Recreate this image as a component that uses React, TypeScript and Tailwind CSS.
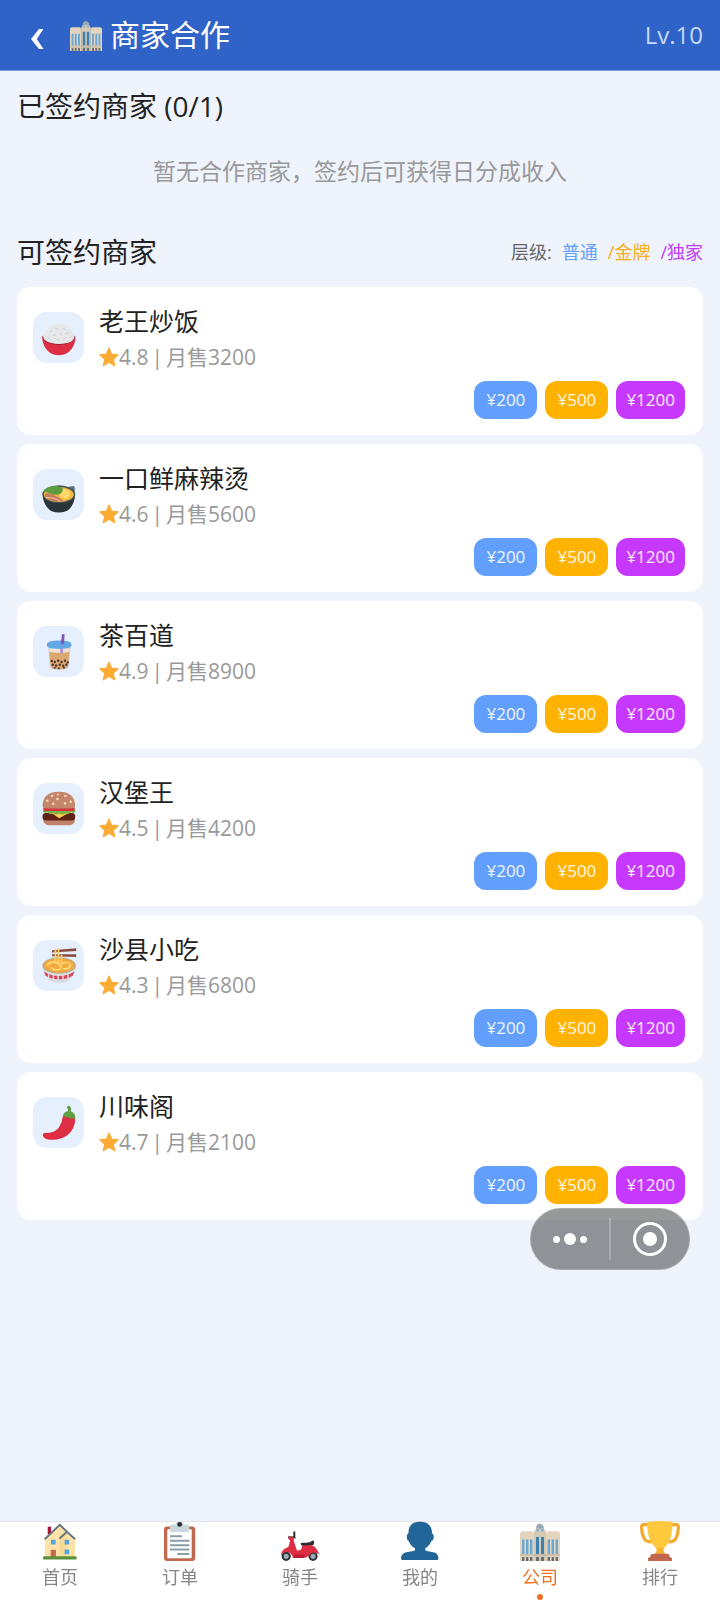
import React, { useState } from 'react';

interface Merchant {
  name: string;
  rating: string;
  sales: number;
  icon: React.ReactNode;
}

const BuildingIcon: React.FC<{ className?: string }> = ({ className }) => (
  <svg viewBox="0 0 40 40" className={className} aria-hidden="true">
    <path d="M16 8 Q16 3 19.5 2.6 Q24 3 24 8Z" fill="#a9aba6" />
    <path d="M0 12 L2 10.3 H12 L14 12 V40 H0Z M26 12 L28 10.3 H38 L40 12 V40 H26Z" fill="#e3d5bd" />
    <path d="M14 11 L16 7.5 H24 L26 11 V40 H14Z" fill="#d3c9b5" />
    <path d="M16.5 8 H18.5 V10.5 H16.5Z M21.5 8 H23.5 V10.5 H21.5Z M19 4.5h2v3h-2z" fill="#6faed2" />
    <path d="M2 18.5h2.4V33H2z M6 18.5h2.4V33H6z M10 18.5h2.4V33H10z M27.6 18.5H30V33h-2.4z M31.6 18.5H34V33h-2.4z M35.6 18.5H38V33h-2.4z" fill="#6aa9d6" />
    <path d="M16 16h3v17h-3z M21 16h3v17h-3z" fill="#3d7fae" />
    <path d="M0 33.4h40v1H0z" fill="#bcb09b" />
    <path d="M2 36h2.4v4H2z M6 36h2.4v4H6z M10 36h2.4v4H10z M16 36h3v4h-3z M21 36h3v4h-3z M27.6 36H30v4h-2.4z M31.6 36H34v4h-2.4z M35.6 36H38v4h-2.4z" fill="#6b6d6c" />
  </svg>
);

const HomeIcon = () => (
  <svg viewBox="0 0 40 40" className="size-10" aria-hidden="true">
    <path d="M7.7 5.7h3.4V13H7.7z" fill="#a8173a" />
    <path d="M5 17.5 L20 4 L35 18.5 V36 H5Z" fill="#fde3a7" />
    <path d="M19.5 17 L26.7 11 V36 H19.5Z" fill="#f8d68b" opacity=".6" />
    <path d="M4.6 18.3 L19.8 3.8 L27 10.8 M19.5 17.6 L27 10.8 L35.2 18.3" fill="none" stroke="#66757f" strokeWidth="2" />
    <path d="M11 18.8h4.6v4.6H11z M24.6 18.8h4.6v4.6h-4.6z M24.6 28.6h4.6v4.6h-4.6z" fill="#55a4e0" />
    <path d="M10.7 28.8h5.2V36h-5.2z" fill="#c1694f" />
    <rect x="2.8" y="35.3" width="34" height="3.3" rx="1.6" fill="#5c913b" />
  </svg>
);

const ClipboardIcon = () => (
  <svg viewBox="0 0 40 40" className="size-10" aria-hidden="true">
    <rect x="4" y="5.6" width="31.2" height="34.4" rx="3" fill="#c1694f" />
    <rect x="7.3" y="8.3" width="24.4" height="29" rx="1" fill="#fff" />
    <path d="M10 5 Q10 3.6 12 3.6 H15.5 Q16 .6 19.7 .6 Q23 .6 23.6 3.6 H27 Q29.2 3.6 29.2 5 V11 H10Z" fill="#ccd6dd" />
    <circle cx="19.7" cy="3.4" r="2.4" fill="#292f33" />
    <path d="M10 15.3h12 M10 19.8h19.4 M10 24.2h19.4 M10 28.6h19.4 M17.3 33h12" stroke="#8b9da8" strokeWidth="2" />
  </svg>
);

const ScooterIcon = () => (
  <svg viewBox="0 0 40 40" className="size-10" aria-hidden="true">
    <circle cx="6.2" cy="35.3" r="3.6" fill="#99aab5" stroke="#292f33" strokeWidth="2" />
    <circle cx="33" cy="35.3" r="3.6" fill="#99aab5" stroke="#292f33" strokeWidth="2" />
    <path d="M14.3 11.2v4 M9 16.3l5.6 .3" stroke="#292f33" strokeWidth="2" strokeLinecap="round" />
    <path d="M8.7 15.6 L14 16.4 Q13 19 14.4 22 L17 29.5 Q20.6 30 21.6 27.6 L22.2 24.4 Q27 22 32.6 24.6 Q38 28 39 33.6 Q33 29 28.4 35 Q26 37.4 22 37 H13 Q11.5 30.6 5.8 31 Q3 31.5 .9 34.4 Q1.6 29.4 5 27.5 L8.4 26 L10.3 19.2 L8.3 18Z" fill="#dd2e44" />
    <path d="M14 33.5h11l-1 3.5H14z" fill="#be1931" />
    <path d="M20.6 22.6 Q21 21.4 24 21.8 Q30 21.6 32.6 19.4 Q34.5 19.6 34.2 21.4 L33.3 24 L21.5 24.4Z" fill="#292f33" />
  </svg>
);

const PersonIcon = () => (
  <svg viewBox="0 0 40 40" className="size-10" aria-hidden="true">
    <path d="M20 .7 C28.5 .7 32 5.5 32 11.8 C32 12.8 33.8 13 33.8 16 C33.8 19 32 19.7 31.3 20 C30 23.8 27.5 26 25.2 27.3 V29.2 C27 30.4 31 30.3 34.5 31.6 C37.5 32.8 38.4 35 38.4 37.4 Q38.4 39 36.8 39 H2.6 Q1 39 1 37.4 C1 35 2.3 32.8 5.3 31.6 C8.6 30.3 13.2 30.4 15 29.2 V27.3 C12.6 26 10 23.8 8.8 20 C8 19.7 6.8 19 6.8 16 C6.8 13 8.5 12.8 8.5 11.8 C8.5 5.5 11.5 .7 20 .7Z" fill="#226699" />
  </svg>
);

const TrophyIcon = () => (
  <svg viewBox="0 0 40 40" className="size-10" aria-hidden="true">
    <path d="M8 3.7 H3.5 Q1.4 3.7 1.6 6.3 Q2 14.5 5 18.6 Q6.6 20.8 11.5 20.8 M32 3.7 H36.5 Q38.6 3.7 38.4 6.3 Q38 14.5 35 18.6 Q33.4 20.8 28.5 20.8" fill="none" stroke="#f4a92c" strokeWidth="3.2" />
    <path d="M7 1.5 Q11 0 20 0 Q29 0 32.6 1.5 Q32.4 20 25 26 Q23 28 23.4 30 L25.6 33.5 H14.4 L16.6 30 Q17 28 15 26 Q7.4 20 7 1.5Z" fill="#ffc83d" />
    <path d="M17 27 H23 Q22.8 31 25.6 34 H14.4 Q17.4 31 17 27Z" fill="#f9b233" />
    <path d="M8 40 V37.5 Q8.3 36 10.4 36 V34.6 Q10.6 32.8 13 32.8 H27 Q29.4 32.8 29.6 34.6 V36 Q31.7 36 32 37.5 V40Z" fill="#c1694f" />
  </svg>
);

const StarIcon = () => (
  <svg viewBox="0 0 20 20" className="size-5" aria-hidden="true">
    <path d="M10 1 L12.6 7.2 L19.2 7.8 L14.2 12.2 L15.8 18.8 L10 15.3 L4.2 18.8 L5.8 12.2 L.8 7.8 L7.4 7.2Z" fill="#fcab35" stroke="#fcab35" strokeWidth="1.2" strokeLinejoin="round" />
  </svg>
);

const RiceIcon = () => (
  <svg viewBox="0 0 150 150" className="size-full" aria-hidden="true">
    <path d="M27 72 Q27 92 38 108 Q52 127 76 127 Q100 127 114 108 Q125 92 125 72Z" fill="#dd2e44" />
    <path d="M29 70 Q26 80 40 89 Q76 104 112 89 Q126 80 123 70Z" fill="#8f1630" />
    <path d="M30 74 Q30 58 44 50 Q56 34 77 34 Q98 34 110 50 Q122 60 122 74 Q119 87 100 91 Q76 97 53 91 Q33 86 30 74Z" fill="#e6e8ea" />
    <path d="M50 58l6-4 M66 48l7 3 M88 47l6 4 M60 70l7-4 M80 62l4 6 M97 64l8-2 M43 74l6 3 M70 82l8-1 M90 80l6-5 M108 76l5-3" stroke="#c8d0d5" strokeWidth="3" strokeLinecap="round" />
  </svg>
);

const HotpotIcon = () => (
  <svg viewBox="0 0 150 150" className="size-full" aria-hidden="true">
    <path d="M98 54 L118 50 Q124 51 123 58 L122 72Z" fill="#5d6f7c" />
    <path d="M28 70 Q28 100 46 118 Q54 128 76 128 Q98 128 107 118 Q124 100 124 70Z" fill="#2b3438" />
    <ellipse cx="76" cy="74" rx="48" ry="26" fill="#46545c" />
    <ellipse cx="76" cy="75" rx="44" ry="22" fill="#f3b545" />
    <path d="M80 60 Q104 56 110 70 Q114 82 98 88 Q82 86 78 74Z" fill="#ffd76a" />
    <path d="M34 74 Q48 68 60 76 Q78 84 88 94 Q62 99 46 90 Q34 84 34 74Z" fill="#c67d5c" />
    <path d="M38 84 Q60 82 80 95" fill="none" stroke="#f2bd9c" strokeWidth="3" />
    <path d="M30 68 Q38 50 66 50 Q86 50 88 61 Q85 74 70 76 Q58 76 50 71 Q40 68 30 68Z" fill="#5c9c3f" />
  </svg>
);

const BubbleTeaIcon = () => (
  <svg viewBox="0 0 150 150" className="size-full" aria-hidden="true">
    <path d="M44 58 H111 L105 120 Q102 129 78 129 Q52 129 50 120Z" fill="#c9d3da" />
    <path d="M48 76 Q78 82 107 76 L103 119 Q100 127 78 127 Q54 127 52 119Z" fill="#dda770" />
    <path d="M48 66 H107 V76 Q78 82 48 76Z" fill="#efe3d3" />
    <path d="M80 62 h8 v18 h-8z" fill="#b08fd4" />
    <path d="M41 54 Q41 43 77 43 Q113 43 113 54 V58 Q113 67 77 67 Q41 67 41 58Z" fill="#62a6e3" />
    <path d="M82 52 L85 24 H93 L91 54Z" fill="#8053b8" />
    <g fill="#4b3430">
      <circle cx="55" cy="103" r="3.5" /><circle cx="64" cy="106" r="3.5" /><circle cx="74" cy="102" r="3.5" />
      <circle cx="84" cy="106" r="3.5" /><circle cx="94" cy="102" r="3.5" /><circle cx="102" cy="107" r="3.5" />
      <circle cx="58" cy="114" r="3.5" /><circle cx="68" cy="116" r="3.5" /><circle cx="79" cy="114" r="3.5" />
      <circle cx="89" cy="117" r="3.5" /><circle cx="98" cy="114" r="3.5" /><circle cx="64" cy="123" r="3" />
      <circle cx="76" cy="124" r="3" /><circle cx="91" cy="123" r="3" />
    </g>
  </svg>
);

const BurgerIcon = () => (
  <svg viewBox="0 0 150 150" className="size-full" aria-hidden="true">
    <path d="M30 102 H123 Q126 124 106 124 H48 Q28 124 30 102Z" fill="#c0826a" />
    <rect x="28" y="88" width="96" height="22" rx="10" fill="#5f2216" />
    <path d="M34 84 H118 L98 92 L77 104 L60 92Z" fill="#ffcf4a" />
    <path d="M28 82 Q33 74 44 78 H110 Q122 74 126 83 Q120 91 112 86 Q104 95 96 88 Q88 96 77 90 Q66 96 58 88 Q50 95 42 86 Q34 92 28 82Z" fill="#7bb245" />
    <rect x="30" y="70" width="93" height="12" rx="6" fill="#d4323f" />
    <path d="M28 66 Q30 26 76 26 Q122 26 124 66 Q124 75 110 75 H42 Q28 75 28 66Z" fill="#c4866d" />
    <g fill="#ffe4b0">
      <circle cx="56" cy="38" r="3.5" /><circle cx="73" cy="34" r="3" /><circle cx="95" cy="38" r="3.5" />
      <circle cx="42" cy="52" r="3.5" /><circle cx="72" cy="47" r="3.5" /><circle cx="60" cy="61" r="3.5" />
      <circle cx="94" cy="60" r="3.5" /><circle cx="111" cy="55" r="3.5" />
    </g>
  </svg>
);

const NoodlesIcon = () => (
  <svg viewBox="0 0 150 150" className="size-full" aria-hidden="true">
    <path d="M28 74 Q28 102 46 116 Q58 127 77 127 Q96 127 108 116 Q126 102 126 74Z" fill="#d9dde0" />
    <path d="M33 93 Q50 106 77 106 Q104 106 121 93 L118 104 Q104 116 77 116 Q50 116 36 104Z" fill="#d2475c" />
    <path d="M46 98 v14 M60 102 v14 M74 104 v14 M88 103 v14 M103 99 v14" stroke="#f5d9dc" strokeWidth="4" />
    <ellipse cx="77" cy="75" rx="49" ry="24" fill="#b8a78c" />
    <ellipse cx="77" cy="75" rx="45" ry="21" fill="#f5a93a" />
    <path d="M42 74 Q52 60 72 68 Q90 76 78 86 Q62 92 54 82 M88 68 Q108 62 110 76 Q106 88 90 84" fill="none" stroke="#ffdc7c" strokeWidth="5" strokeLinecap="round" />
    <path d="M56 30 L127 24 V32 L56 37Z M56 42 L127 42 V50 L56 48Z" fill="#8a4b3f" />
    <path d="M66 68 V28 M75 68 V26 M84 70 V45" fill="none" stroke="#ffd268" strokeWidth="5" strokeLinecap="round" />
  </svg>
);

const ChiliIcon = () => (
  <svg viewBox="0 0 150 150" className="size-full" aria-hidden="true">
    <path d="M88 56 Q122 50 124 68 Q123 94 102 112 Q78 130 44 125 Q28 120 29 110 Q31 103 42 106 Q64 106 76 90 Q86 76 88 56Z" fill="#dd2e44" />
    <path d="M88 58 Q88 44 103 42 Q106 36 99 31 Q102 24 109 27 Q114 34 111 42 Q127 48 124 66 Q117 58 110 64 Q104 56 97 61 Q93 54 88 58Z" fill="#5f9f42" />
  </svg>
);

const merchants: Merchant[] = [
  { name: '老王炒饭', rating: '4.8', sales: 3200, icon: <RiceIcon /> },
  { name: '一口鲜麻辣烫', rating: '4.6', sales: 5600, icon: <HotpotIcon /> },
  { name: '茶百道', rating: '4.9', sales: 8900, icon: <BubbleTeaIcon /> },
  { name: '汉堡王', rating: '4.5', sales: 4200, icon: <BurgerIcon /> },
  { name: '沙县小吃', rating: '4.3', sales: 6800, icon: <NoodlesIcon /> },
  { name: '川味阁', rating: '4.7', sales: 2100, icon: <ChiliIcon /> },
];

const tiers = [
  { label: '普通', price: 200, color: 'bg-[#629ffc]' },
  { label: '金牌', price: 500, color: 'bg-[#ffb300]' },
  { label: '独家', price: 1200, color: 'bg-[#c638fc]' },
];

const tabs = [
  { label: '首页', icon: <HomeIcon /> },
  { label: '订单', icon: <ClipboardIcon /> },
  { label: '骑手', icon: <ScooterIcon /> },
  { label: '我的', icon: <PersonIcon /> },
  { label: '公司', icon: <BuildingIcon className="size-10" /> },
  { label: '排行', icon: <TrophyIcon /> },
];

const MerchantCard: React.FC<{ merchant: Merchant }> = ({ merchant }) => (
  <li className="bg-white rounded-[14px] px-4 pt-4 pb-4">
    <div className="flex items-start gap-[15px]">
      <div className="size-[51px] mt-[9px] shrink-0 rounded-[14px] bg-[#e6effd]">{merchant.icon}</div>
      <div>
        <h3 className="text-[25px] leading-9 text-[#222]">{merchant.name}</h3>
        <p className="flex items-center text-[21px] leading-9 text-[#999]">
          <StarIcon />
          <span className="flex gap-[3px]">
            <span>{merchant.rating}</span>
            <span>|</span>
            <span>月售{merchant.sales}</span>
          </span>
        </p>
      </div>
    </div>
    <div className="mt-1.5 flex justify-end gap-2 pr-0.5">
      {tiers.map((tier) => (
        <button
          key={tier.label}
          aria-label={`${tier.label} ¥${tier.price}`}
          className={`h-[38px] min-w-[63px] px-2.5 rounded-xl text-[17px] text-white/90 ${tier.color}`}
        >
          ¥{tier.price}
        </button>
      ))}
    </div>
  </li>
);

export default function App() {
  const [activeTab, setActiveTab] = useState('公司');

  return (
    <div className="min-h-screen bg-[#eff3fb] pb-20 font-['Open_Sans','Noto_Sans_CJK_SC',sans-serif]">
      <header className="flex h-[71px] items-center border-b border-[#7b9be0] bg-[#3063c8] pl-[30px] pr-[17px] text-white">
        <button aria-label="返回" className="mt-2 mr-[26px]">
          <svg viewBox="0 0 14 22" className="h-[22px] w-3.5" aria-hidden="true">
            <path d="M9 1 H13.5 L6.8 11 L13.5 21 H9 L1 11Z" fill="#fff" />
          </svg>
        </button>
        <BuildingIcon className="size-8" />
        <h1 className="ml-2 flex-1 text-[30px] leading-10">商家合作</h1>
        <span className="text-[24px] text-[#c6d8f6]">Lv.10</span>
      </header>

      <main className="px-[17px] pt-[17px]">
        <h2 className="text-[28px] leading-9 text-[#222]">已签约商家 (0/1)</h2>
        <p className="pt-[30px] pb-[46px] text-center text-[23px] leading-[34px] text-[#999]">
          暂无合作商家，签约后可获得日分成收入
        </p>

        <div className="mb-[17px] flex items-center justify-between">
          <h2 className="text-[28px] leading-9 text-[#222]">可签约商家</h2>
          <p className="flex gap-[10px] text-[18px] text-[#666]">
            <span>层级:</span>
            <span className="text-[#629ffc]">普通</span>
            <span className="text-[#f5ae14]">/金牌</span>
            <span className="text-[#c03cf5]">/独家</span>
          </p>
        </div>

        <ul className="flex flex-col gap-[9px]">
          {merchants.map((merchant) => (
            <MerchantCard key={merchant.name} merchant={merchant} />
          ))}
        </ul>
      </main>

      {/* Floating capsule */}
      <div className="fixed right-[30px] bottom-[330px] flex h-[62px] w-40 items-center rounded-full border border-white/20 bg-[#303131]/50">
        <button aria-label="更多" className="flex flex-1 items-center justify-center gap-1">
          <span className="size-[7px] rounded-full bg-white" />
          <span className="size-3 rounded-full bg-white" />
          <span className="size-[7px] rounded-full bg-white" />
        </button>
        <span className="h-[42px] w-0.5 bg-white/25" />
        <button aria-label="关闭" className="flex flex-1 justify-center">
          <span className="flex size-[34px] items-center justify-center rounded-full border-[3px] border-white">
            <span className="size-[14px] rounded-full bg-white" />
          </span>
        </button>
      </div>

      <nav className="fixed inset-x-0 bottom-0 grid h-[78px] grid-cols-6 bg-white shadow-[0_-1px_0_#dfe1e6]">
        {tabs.map((tab) => (
          <button
            key={tab.label}
            onClick={() => setActiveTab(tab.label)}
            className={`flex h-[78px] flex-col items-center justify-end text-[18px] leading-6 ${
              activeTab === tab.label ? 'text-[#f07020]' : 'text-[#858585]'
            }`}
          >
            <span className="shrink-0">{tab.icon}</span>
            <span className="mt-1">{tab.label}</span>
            <span className={`mt-[5px] size-1.5 shrink-0 rounded-full ${activeTab === tab.label ? 'bg-[#f07020]' : ''}`} />
          </button>
        ))}
      </nav>
    </div>
  );
}
